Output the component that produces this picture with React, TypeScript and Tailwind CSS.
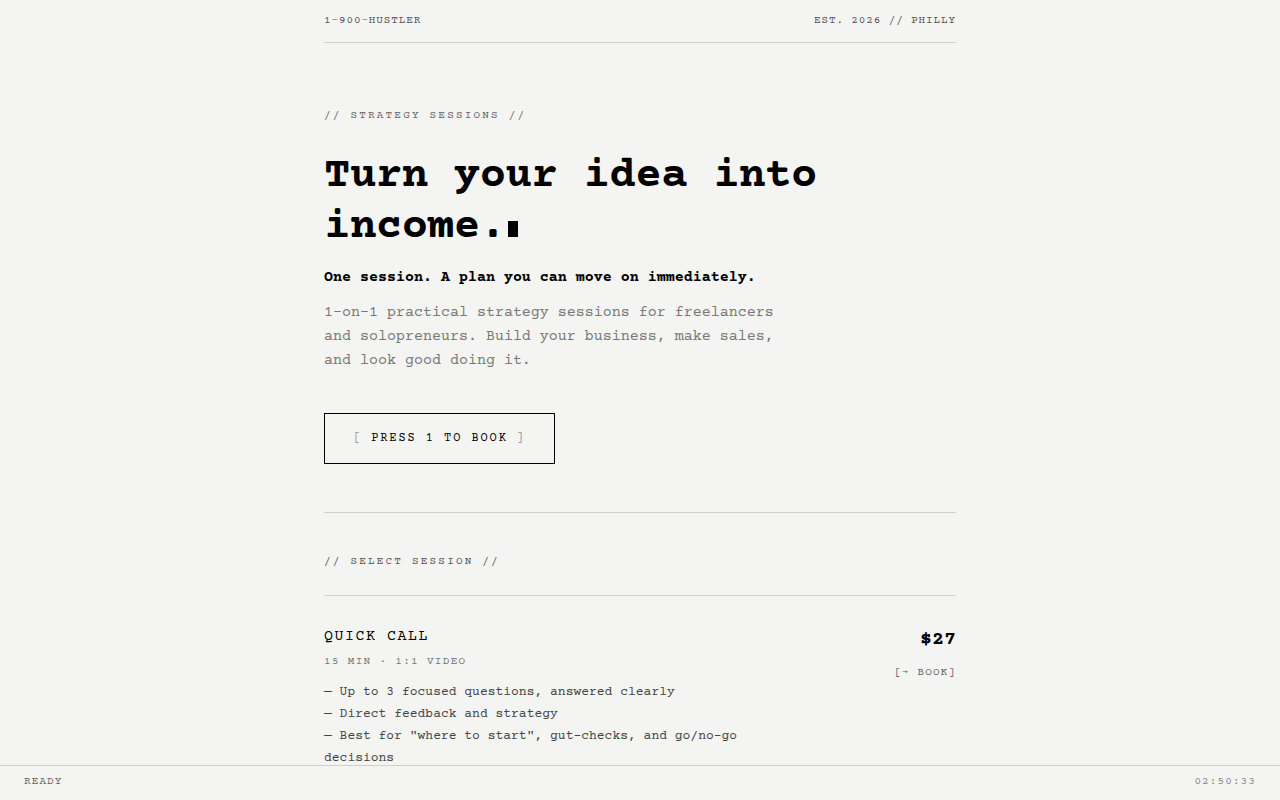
import React from "react";

export default function App() {
  return (
    <div className="min-h-screen bg-[#f4f4f2] font-['Courier_Prime','FreeMono',monospace] text-black">
      <div className="mx-auto w-[632px] pb-[60px]">
        <header className="flex justify-between border-b border-[#cfcfcd] pt-[13px] pb-[13px] text-[11px] leading-4 tracking-[0.08em] text-[#555]">
          <span>1-900-HUSTLER</span>
          <span>EST. 2026 // PHILLY</span>
        </header>

        <section className="border-b border-[#cfcfcd] pt-[65px] pb-[48px]">
          <div className="text-[11px] leading-4 tracking-[0.2em] text-[#666]">// STRATEGY SESSIONS //</div>
          <h1 className="mt-[28px] text-[44px] font-bold leading-[1.15] tracking-[-0.01em] text-black">
            Turn your idea into
            <br />
            income.<span className="ml-[2px] inline-block h-[16px] w-[10px] bg-black align-[0px]"></span>
          </h1>
          <p className="mt-[13px] text-[15px] font-bold leading-6 text-black">
            One session. A plan you can move on immediately.
          </p>
          <p className="mt-[11px] max-w-[470px] text-[15px] leading-6 text-[#777]">
            1-on-1 practical strategy sessions for freelancers and solopreneurs. Build your business, make sales, and look good doing it.
          </p>
          <button className="mt-[40px] flex h-[51px] w-[231px] items-center justify-center border border-black text-[12px] leading-4 tracking-[0.16em] text-black">
            <span className="text-[#999]">[</span>
            <span className="mx-[0.7em]">PRESS 1 TO BOOK</span>
            <span className="text-[#999]">]</span>
          </button>
        </section>

        <div className="border-b border-[#cfcfcd] pt-[41px] pb-[25px] text-[11px] leading-4 tracking-[0.2em] text-[#555]">
          // SELECT SESSION //
        </div>

        <div className="flex justify-between pt-[31px]">
          <div className="max-w-[440px]">
            <div className="text-[15px] leading-5 tracking-[0.1em] text-black">QUICK CALL</div>
            <div className="mt-[7px] text-[11px] leading-4 tracking-[0.12em] text-[#777]">15 MIN · 1:1 VIDEO</div>
            <ul className="mt-[11px] text-[13px] leading-[22px] text-[#444]">
              <li>— Up to 3 focused questions, answered clearly</li>
              <li>— Direct feedback and strategy</li>
              <li>— Best for "where to start", gut-checks, and go/no-go decisions</li>
            </ul>
          </div>
          <div className="flex flex-col items-end">
            <div className="text-[20px] font-bold leading-[26px] text-black">$27</div>
            <div className="mt-[12px] text-[11px] leading-4 tracking-[0.1em] text-[#666]">[→ BOOK]</div>
          </div>
        </div>

        <div className="mt-10 border-t border-[#cfcfcd] pt-[29px] text-[15px] leading-5 tracking-[0.1em]">
          STRATEGY SESSION
        </div>
      </div>

      <footer className="fixed inset-x-0 bottom-0 flex justify-between border-t border-[#cfcfcd] bg-[#f4f4f2] px-6 pt-[8px] pb-[10px] text-[11px] leading-4 tracking-[0.1em]">
        <span className="text-[#666]">READY</span>
        <span className="text-[#888]">02:50:33</span>
      </footer>
    </div>
  );
}
